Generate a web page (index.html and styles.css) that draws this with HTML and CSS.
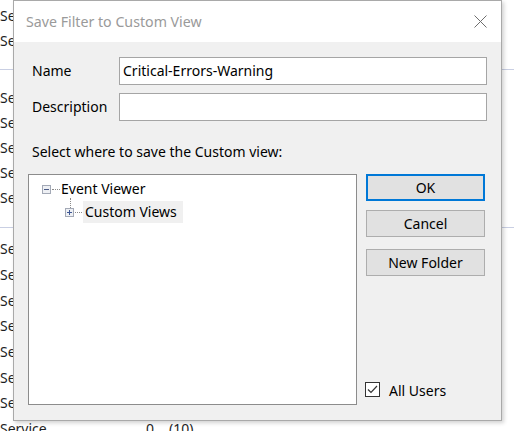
FILE: index.html
```html
<!DOCTYPE html>
<html>
<head>
<meta charset="utf-8">
<link rel="stylesheet" href="styles.css">
</head>
<body>
<div class="backdrop">
  <div class="group g1">
    <div class="row"><span class="c1">Service</span></div>
    <div class="row"><span class="c1">Service</span></div>
  </div>
  <div class="sep s1"></div>
  <div class="group">
    <div class="row"><span class="c1">Service</span></div>
    <div class="row"><span class="c1">Service</span></div>
    <div class="row"><span class="c1">Service</span></div>
    <div class="row"><span class="c1">Service</span></div>
    <div class="row"><span class="c1">Service</span></div>
  </div>
  <div class="sep s2"></div>
  <div class="group g3">
    <div class="row"><span class="c1">Service</span></div>
    <div class="row"><span class="c1">Service</span></div>
    <div class="row"><span class="c1">Service</span></div>
    <div class="row"><span class="c1">Service</span></div>
    <div class="row"><span class="c1">Service</span></div>
    <div class="row"><span class="c1">Service</span></div>
    <div class="row"><span class="c1">Service</span></div>
    <div class="row"><span class="c1">Service</span><span class="c2">0</span><span class="c3">(10)</span></div>
  </div>
</div>

<div class="dialog">
  <div class="titlebar">
    <span class="title">Save Filter to Custom View</span>
    <svg class="close" width="13" height="13" viewBox="0 0 13 13"><path d="M0.5 0.5 L12.5 12.5 M12.5 0.5 L0.5 12.5" stroke="#6e6e6e" stroke-width="1" fill="none"/></svg>
  </div>
  <div class="body">
    <div class="form">
      <label class="lbl">Name</label>
      <div class="input">Critical-Errors-Warning</div>
      <label class="lbl">Description</label>
      <div class="input"></div>
    </div>
    <div class="prompt">Select where to save the Custom view:</div>
    <div class="main">
      <div class="tree">
        <div class="node n1">
          <svg class="box" width="9" height="9" viewBox="0 0 9 9"><rect x="0.5" y="0.5" width="8" height="8" fill="#eef0f4" stroke="#a3a9b6"/><path d="M2 4.5 H7" stroke="#4a5a86" stroke-width="1"/></svg>
          <span class="dots"></span>
          <span class="txt">Event Viewer</span>
        </div>
        <div class="node n2">
          <span class="vline"></span>
          <svg class="box" width="9" height="9" viewBox="0 0 9 9"><rect x="0.5" y="0.5" width="8" height="8" fill="#eef0f4" stroke="#a3a9b6"/><path d="M2 4.5 H7 M4.5 2 V7" stroke="#3e5794" stroke-width="1"/></svg>
          <span class="dots"></span>
          <span class="txt sel">Custom Views</span>
        </div>
      </div>
      <div class="side">
        <button class="btn ok">OK</button>
        <button class="btn">Cancel</button>
        <button class="btn nf">New Folder</button>
        <div class="check">
          <svg width="15" height="15" viewBox="0 0 15 15"><rect x="0.5" y="0.5" width="14" height="14" fill="#fff" stroke="#333"/><path d="M3 7.5 L6 10.5 L12 4" stroke="#333" stroke-width="1.2" fill="none"/></svg>
          <span>All Users</span>
        </div>
      </div>
    </div>
  </div>
</div>
</body>
</html>
```
FILE: styles.css
```css
html, body {
  margin: 0;
  padding: 0;
  width: 514px;
  height: 431px;
  overflow: hidden;
  background: #fff;
  font-family: "Noto Sans", "Open Sans", sans-serif;
  font-size: 14px;
  color: #000;
}

.backdrop {
  padding-top: 3px;
}

.row {
  height: 25px;
  display: flex;
  align-items: center;
  color: #1e1e1e;
}
.g3 .row { height: 25.7px; }

.c1 { width: 146px; }
.c2 { width: 23px; }
.c3 { width: 40px; }

.sep {
  height: 1px;
  background: #c9cfe3;
}
.s1 { margin: 16px 0 15px; }
.s2 { margin: 17px 0 8px; }

.dialog {
  position: absolute;
  left: 13px;
  top: 0;
  width: 487px;
  height: 419px;
  border: 1px solid #a9a9a9;
  background: #f0f0f0;
  box-shadow: 2px 2px 4px rgba(0,0,0,0.18);
  display: flex;
  flex-direction: column;
}

.titlebar {
  height: 41px;
  background: #fff;
  display: flex;
  align-items: center;
  justify-content: space-between;
  padding: 0 14px 0 12px;
  flex: none;
}
.title {
  color: #9a9a9a;
  font-size: 14.2px;
}
.close { display: block; }

.body {
  flex: 1;
  padding: 15px 14px 15px 14px;
  display: flex;
  flex-direction: column;
}

.form {
  display: grid;
  grid-template-columns: 87px 1fr;
  row-gap: 8px;
  margin-left: 4px;
  align-items: center;
}
.lbl { line-height: 28px; }
.input {
  height: 26px;
  border: 1px solid #a5a5a5;
  background: #fff;
  padding-left: 3px;
  line-height: 26px;
}

.prompt {
  margin: 22px 0 0 4px;
  line-height: 18px;
}

.main {
  display: flex;
  gap: 9px;
  margin-top: 13px;
  flex: 1;
}

.tree {
  width: 327px;
  border: 1px solid #8c8c8c;
  background: #fff;
  padding-top: 3px;
}

.node {
  display: flex;
  align-items: center;
  height: 22px;
  position: relative;
}
.n1 { padding-left: 13px; }
.n2 { padding-left: 36px; margin-top: 1px; }
.box { display: block; flex: none; }
.dots {
  width: 8px;
  border-top: 1px dotted #8a8a8a;
  flex: none;
  margin-left: 1px;
}
.n2 .dots { width: 7px; }
.txt { margin-left: 1px; line-height: 22px; }
.sel { background: #f0f0f0; padding: 0 6px 0 2px; }
.vline {
  position: absolute;
  left: 41px;
  top: -3px;
  height: 10px;
  border-left: 1px dotted #8a8a8a;
}

.side {
  width: 119px;
  display: flex;
  flex-direction: column;
}

.btn {
  height: 27px;
  background: #e1e1e1;
  border: 1px solid #adadad;
  font: inherit;
  color: #000;
  padding: 0;
  margin-bottom: 9px;
}
.btn.ok {
  border: 2px solid #0078d7;
}
.btn.nf { margin-top: 3px; }

.check {
  margin-top: auto;
  margin-bottom: 5px;
  display: flex;
  align-items: center;
  gap: 9px;
  margin-left: -1px;
}
.check svg { display: block; }
.check span { padding-top: 2px; }
```
